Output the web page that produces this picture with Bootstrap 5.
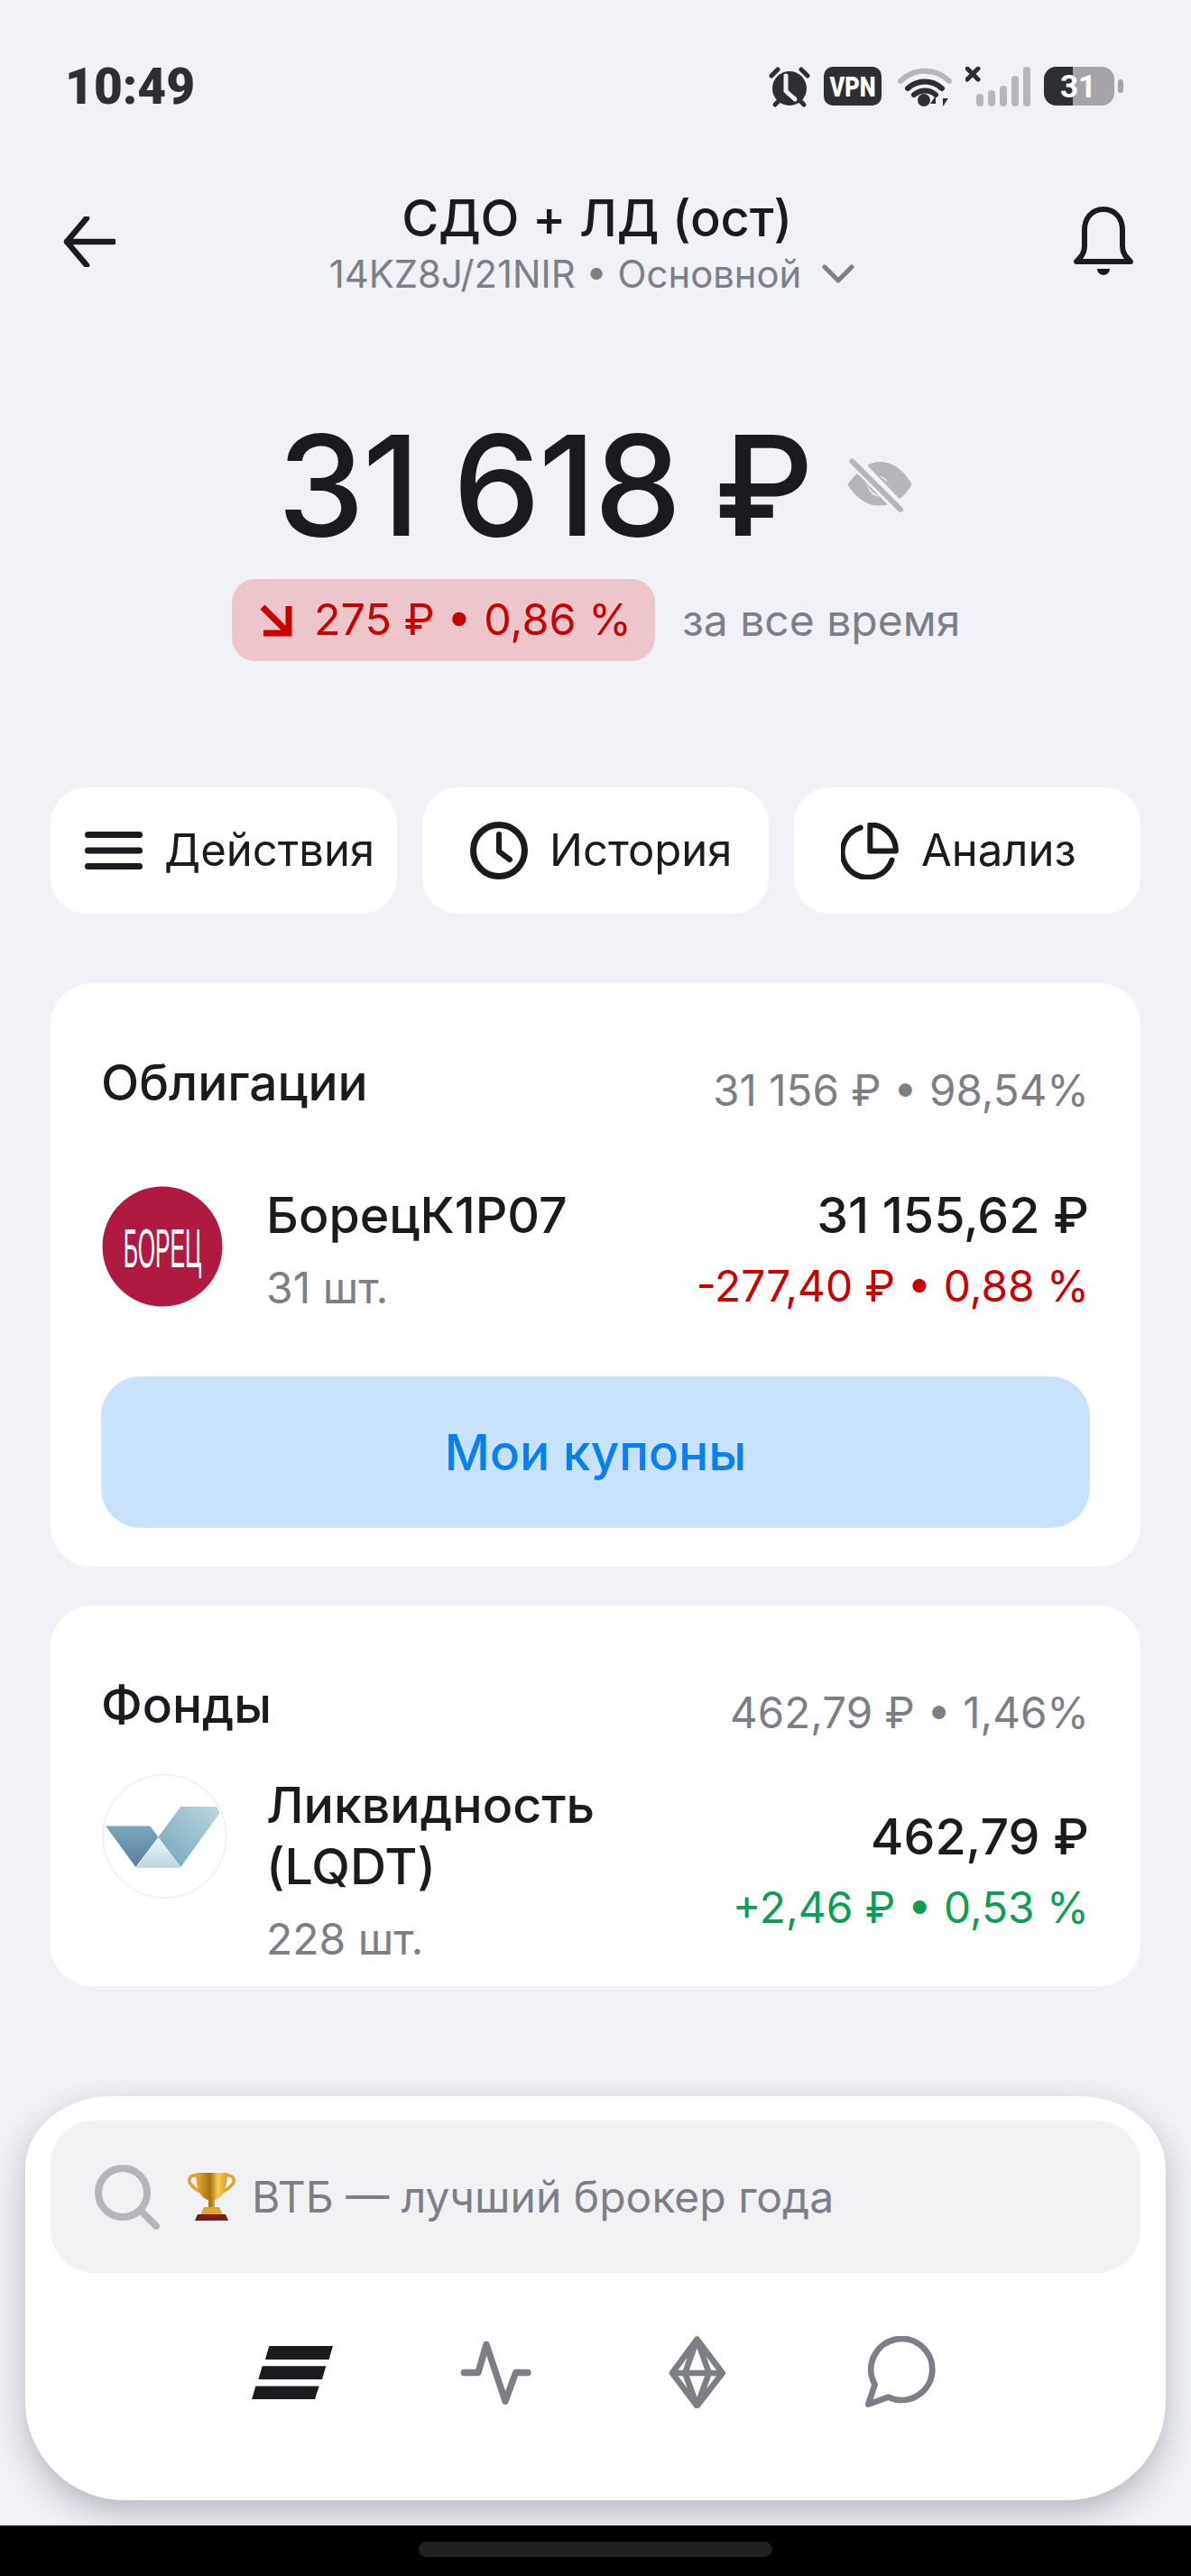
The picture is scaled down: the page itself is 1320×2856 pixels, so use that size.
<!DOCTYPE html>
<html lang="ru">
<head>
<meta charset="utf-8">
<title>СДО + ЛД (ост)</title>
<link rel="stylesheet" href="https://cdn.jsdelivr.net/npm/bootstrap@5.3.0/dist/css/bootstrap.min.css">
<style>
html,body{margin:0;padding:0}
body{width:1320px;height:2856px;overflow:hidden;background:#f0f2f7;color:#1a1b1f;font-family:Inter,"Noto Sans",sans-serif;font-size:48px;line-height:1.2}
svg{display:block;flex:none}
.shell{height:2856px}
.stat-row{height:118px;padding:74px 75px 0 72px}
.clock-txt{font-family:Roboto,sans-serif;font-weight:900;font-size:55px;line-height:44px;color:#2e2f33}
.gap-a{margin-left:15px}
.gap-b{margin-left:18px}
.head-bar{height:186px;padding:94px 63px 0 70px}
.back-ico{margin-top:28px}
.bell-ico{margin-top:16px}
.head-title{font-size:56px;line-height:60px;font-weight:500;letter-spacing:-.2px;margin-left:6px}
.head-sub{font-size:41.800px;line-height:50px;color:#7d7f87;margin-top:7px;margin-right:5px;gap:23px}
.amount-wrap{height:338px;padding-top:154px}
.amount-val{font-size:154px;line-height:160px;font-weight:500;letter-spacing:-2.300px;margin-right:36px}
.chip-row{height:91px;gap:30px;padding-left:257px}
.loss-chip{height:91px;width:469px;background:#edc6cc;border-radius:26px;color:#c80000;padding-left:31px;gap:24px;font-size:48.500px}
.muted-txt{color:#7d7f87}
.act-row{margin:140px 56px 0;gap:28px}
.act-btn{width:384px;height:140px;border-radius:40px;background:#fff;border:0;color:#1a1b1f;font-size:49px;gap:24px}
.act-a{padding:0 0 0 38px}
.act-b{padding:0 0 0 53px}
.act-c{padding:0 0 0 52px}
.panel-box{margin:77px 56px 0;background:#fff;border-radius:46px;padding:0 57px 0 56px}
.panel-a{height:647px}
.panel-b{height:422px;margin-top:43px}
.panel-head{align-items:center;padding-top:71px}
.panel-name{font-size:55px;line-height:64px;font-weight:500}
.panel-sum{font-size:47.500px;line-height:60px;color:#7d7f87;margin-top:18px}
.bond-row{margin-top:74px}
.fund-row{margin-top:38px}
.logo-gap-a{margin:0 48px 8px 1px}
.logo-gap-b{margin:0 43px 0 1px}
.asset-name{font-size:55.500px;line-height:68px;font-weight:500}
.asset-cnt{font-size:48px;line-height:60px;color:#7d7f87;margin-top:17px}
.asset-val{font-size:55.500px;line-height:64px;font-weight:500}
.asset-chg{font-size:47.800px;line-height:60px;margin-top:17px}
.fund-vals{margin-top:37px}
.loss-txt{color:#c80000}
.gain-txt{color:#0e9d52}
.coupon-btn{display:block;width:1096px;height:168px;margin-top:68px;border:0;border-radius:44px;background:#c8e2fd;color:#0a7ff0;font-size:55px;font-weight:500}
.dock-box{width:1264px;height:448px;margin:0 28px;background:#fff;border-radius:96px 96px 110px 110px/80px 80px 110px 110px;box-shadow:0 14px 34px rgba(60,62,75,.32);padding:27px 28px 0}
.find-box{height:169px;background:#f2f2f4;border-radius:48px;padding-left:49px;color:#7d7f87;font-size:48px}
.cup-ico{margin-left:31px}
.find-txt{margin-left:18px}
.dock-nav{height:220px}
.nav-a{margin-left:223px}
.nav-b{margin-left:141px}
.nav-c{margin-left:152px}
.nav-d{margin-left:154px}
.nav-bar{height:56px;background:#000;padding-top:18px;margin-top:28px}
.home-pill{width:392px;height:17px;border-radius:9px;background:#202020}
</style>
</head>
<body>
<div class="shell d-flex flex-column">
  <div class="stat-row d-flex justify-content-between align-items-start">
    <div class="clock-txt">10:49</div>
    <div class="d-flex align-items-start">
      <svg width="46" height="46" viewBox="0 0 46 46"><path d="M3 10 10 3M43 10 36 3" stroke="#2e2f33" stroke-width="5" stroke-linecap="round"/><circle cx="23" cy="24" r="19" fill="#2e2f33"/><path d="M7 42l4-4M39 42l-4-4" stroke="#2e2f33" stroke-width="5" stroke-linecap="round"/><path d="M19 10v17l10 9" fill="none" stroke="#f0f2f7" stroke-width="5" stroke-linecap="round"/></svg>
      <svg class="gap-a" width="64" height="43" viewBox="0 0 64 43"><rect width="64" height="43" rx="10" fill="#2e2f33"/><text transform="translate(32 33) scale(.82 1)" text-anchor="middle" font-family="Roboto" font-weight="900" font-size="31" fill="#fff">VPN</text></svg>
      <svg class="gap-b" width="60" height="46" viewBox="0 0 60 46"><path d="M3 16C18 1 42 1 57 16" fill="none" stroke="#b6b7bb" stroke-width="6" stroke-linecap="round"/><path d="M11 24C22 14 38 14 49 24M18 31C25 25 35 25 42 31" fill="none" stroke="#2e2f33" stroke-width="6" stroke-linecap="round"/><circle cx="29" cy="37" r="7" fill="#2e2f33"/><path d="M42 44V32l-6 9h6zM50 31v13l6-9h-6z" fill="#2e2f33"/></svg>
      <svg class="gap-a" width="72" height="44" viewBox="0 0 72 44"><path d="M2 2 14 14M14 2 2 14" stroke="#2e2f33" stroke-width="5" stroke-linecap="round"/><g fill="none" stroke="#b6b7bb" stroke-width="8" stroke-linecap="round"><path d="M16 34v6M29 30v10M42 25v15M55 14v26M68 4v36"/></g></svg>
      <svg class="gap-a" width="88" height="43" viewBox="0 0 88 43"><rect width="78" height="43" rx="14" fill="#a5a5a9"/><path d="M14 0h18v43H14A14 14 0 0 1 0 29V14A14 14 0 0 1 14 0z" fill="#2e2f33"/><rect x="82" y="14" width="6" height="15" rx="3" fill="#a5a5a9"/><text x="38" y="34" text-anchor="middle" font-family="Roboto" font-weight="700" font-size="35" fill="#fff">31</text></svg>
    </div>
  </div>

  <div class="head-bar d-flex justify-content-between align-items-start">
    <svg class="back-ico" width="58" height="56" viewBox="0 0 58 56"><path d="M26 2 4 28l22 26M4 28h52" fill="none" stroke="#1a1b1f" stroke-width="6.500" stroke-linecap="round" stroke-linejoin="round"/></svg>
    <div class="text-center">
      <div class="head-title">СДО + ЛД (ост)</div>
      <div class="head-sub d-flex align-items-center justify-content-center">14KZ8J/21NIR • Основной
        <svg width="36" height="22" viewBox="0 0 36 22"><path d="M3 3l15 15L33 3" fill="none" stroke="#7d7f87" stroke-width="5" stroke-linecap="round" stroke-linejoin="round"/></svg>
      </div>
    </div>
    <svg class="bell-ico" width="68" height="78" viewBox="0 0 68 78"><path d="M34 4C21 4 13 14 13 27v18c0 8-4 12-9 17h60c-5-5-9-9-9-17V27C55 14 47 4 34 4z" fill="none" stroke="#1a1b1f" stroke-width="6" stroke-linejoin="round"/><path d="M27 70a7 7 0 0 0 14 0z" fill="#1a1b1f"/></svg>
  </div>

  <div class="amount-wrap text-center">
    <div class="d-flex justify-content-center align-items-center">
      <div class="amount-val">31 618 ₽</div>
      <svg width="77" height="62" viewBox="100 55 230 185"><path d="M110 145C150 90 190 70 215 70c45 0 85 30 107 75-22 45-67 70-107 70-45 0-80-30-105-70z" fill="#b5b6bb"/><path d="M125 60l172 178" stroke="#f0f2f7" stroke-width="42"/><path d="M125 68l160 160" stroke="#b5b6bb" stroke-width="18" stroke-linecap="round"/><path d="M175 140c5 20 20 35 40 43-20 5-40-20-40-43zM216 118c12 0 22 8 26 18z" fill="#f0f2f7"/></svg>
    </div>
  </div>

  <div class="chip-row d-flex justify-content-start">
    <div class="loss-chip d-flex align-items-center">
      <svg width="36" height="36" viewBox="0 0 36 36"><path d="M3 3l28 28M32 2v30H4" fill="none" stroke="#c80000" stroke-width="7"/></svg>
      <span>275 ₽ • 0,86 %</span>
    </div>
    <div class="muted-txt align-self-center">за все время</div>
  </div>

  <div class="act-row d-flex">
    <button class="act-btn act-a btn d-flex align-items-center">
      <svg width="64" height="42" viewBox="0 0 64 42"><path d="M3.500 3.500h57M3.500 21h57M3.500 38.500h57" stroke="#1a1b1f" stroke-width="7" stroke-linecap="round"/></svg>
      Действия
    </button>
    <button class="act-btn act-b btn d-flex align-items-center">
      <svg width="64" height="64" viewBox="0 0 64 64"><circle cx="32" cy="32" r="28.500" fill="none" stroke="#1a1b1f" stroke-width="7"/><path d="M32 14v19l12 9" fill="none" stroke="#1a1b1f" stroke-width="6" stroke-linecap="round" stroke-linejoin="round"/></svg>
      История
    </button>
    <button class="act-btn act-c btn d-flex align-items-center">
      <svg width="65" height="63" viewBox="155 125 195 190"><path d="M220 142A85 85 0 1 0 325 250" fill="none" stroke="#1a1b1f" stroke-width="18" stroke-linecap="round"/><path d="M252 132v88h86c0-50-38-88-86-88z" fill="none" stroke="#1a1b1f" stroke-width="18" stroke-linejoin="round"/></svg>
      Анализ
    </button>
  </div>

  <div class="panel-box panel-a">
    <div class="panel-head d-flex justify-content-between">
      <div class="panel-name">Облигации</div>
      <div class="panel-sum">31 156 ₽ • 98,54%</div>
    </div>
    <div class="bond-row d-flex align-items-center justify-content-between">
      <div class="d-flex align-items-center">
        <svg class="logo-gap-a" width="134" height="134" viewBox="0 0 134 134"><circle cx="67" cy="67" r="66.500" fill="#b01a42"/><text transform="translate(67 90) scale(.4 1)" text-anchor="middle" font-family="Liberation Sans" font-size="62" fill="#fff">БОРЕЦ</text></svg>
        <div>
          <div class="asset-name">БорецК1Р07</div>
          <div class="asset-cnt">31 шт.</div>
        </div>
      </div>
      <div class="text-end">
        <div class="asset-val">31 155,62 ₽</div>
        <div class="asset-chg loss-txt">-277,40 ₽ • 0,88 %</div>
      </div>
    </div>
    <button class="coupon-btn btn">Мои купоны</button>
  </div>

  <div class="panel-box panel-b">
    <div class="panel-head d-flex justify-content-between">
      <div class="panel-name">Фонды</div>
      <div class="panel-sum">462,79 ₽ • 1,46%</div>
    </div>
    <div class="fund-row d-flex align-items-start justify-content-between">
      <div class="d-flex align-items-start">
        <svg class="logo-gap-b" width="139" height="138" viewBox="218 110 417 415">
          <defs>
            <linearGradient id="lg1" x1="0" y1="0" x2="0" y2="1"><stop offset="0" stop-color="#76a8bb"/><stop offset="1" stop-color="#5d7da0"/></linearGradient>
            <linearGradient id="lg2" x1="1" y1="0" x2="0" y2="1"><stop offset="0" stop-color="#bcd8e0"/><stop offset="1" stop-color="#6fa5b9"/></linearGradient>
            <linearGradient id="lg3" x1="0" y1="0" x2="0" y2="1"><stop offset="0" stop-color="#eef5f7"/><stop offset="1" stop-color="#bcd5de"/></linearGradient>
          </defs>
          <circle cx="426" cy="317" r="205" fill="#fff" stroke="#eeeff1" stroke-width="5"/>
          <path d="M230 283H378L405 320 330 420z" fill="url(#lg1)"/>
          <path d="M480 218H600L610 240 480 420 405 320z" fill="url(#lg2)"/>
          <path d="M405 322 480 422H332z" fill="url(#lg3)"/>
        </svg>
        <div>
          <div class="asset-name">Ликвидность<br>(LQDT)</div>
          <div class="asset-cnt">228 шт.</div>
        </div>
      </div>
      <div class="text-end fund-vals">
        <div class="asset-val">462,79 ₽</div>
        <div class="asset-chg gain-txt">+2,46 ₽ • 0,53 %</div>
      </div>
    </div>
  </div>

  <div class="flex-grow-1"></div>

  <div class="dock-box">
    <div class="find-box d-flex align-items-center">
      <svg width="72" height="72" viewBox="0 0 72 72"><circle cx="31" cy="31" r="27" fill="none" stroke="#b5b6bb" stroke-width="8"/><path d="M52 52l16 16" stroke="#b5b6bb" stroke-width="8" stroke-linecap="round"/></svg>
      <svg class="cup-ico" width="53" height="55" viewBox="0 0 53 55">
        <defs><linearGradient id="gold" x1="0" x2="1" y1="0" y2="0"><stop offset="0" stop-color="#e5ad33"/><stop offset=".45" stop-color="#a96f12"/><stop offset=".7" stop-color="#f6cd58"/><stop offset="1" stop-color="#dc9d26"/></linearGradient></defs>
        <path d="M10 4C3 3 0 8 3 13c3 5 9 8 13 10M43 4c7-1 10 4 7 9-3 5-9 8-13 10" fill="none" stroke="#dda52f" stroke-width="3.500"/>
        <path d="M9 1h35c0 14-4 28-14 30v8h-7v-8C13 29 9 15 9 1z" fill="url(#gold)"/>
        <path d="M18 39h17l4 9H14z" fill="#e0a52d"/><path d="M11 47h31l3 7H8z" fill="#7e1c10"/>
      </svg>
      <span class="find-txt">ВТБ — лучший брокер года</span>
    </div>
    <div class="dock-nav d-flex align-items-center justify-content-start">
      <svg class="nav-a" width="90" height="59" viewBox="27 63 271 178"><path d="M85 63H298L285 108H72zM62 130H275L262 175H49zM40 197H252L238 241H27z" fill="#1a1b1f"/></svg>
      <svg class="nav-b" width="79" height="71" viewBox="715 40 237 212"><path d="M728 146H775L802 52 865 241 900 146H940" fill="none" stroke="#7d7f87" stroke-width="22" stroke-linecap="round" stroke-linejoin="round"/></svg>
      <svg class="nav-c" width="63" height="80" viewBox="60 25 190 240"><g fill="none" stroke="#7d7f87" stroke-width="20" stroke-linejoin="round"><path d="M155 35 240 148 155 258 72 148zM72 148H240M155 35 115 148 155 258M155 35 195 148 155 258"/></g></svg>
      <svg class="nav-d" width="80" height="80" viewBox="710 25 240 240"><path d="M745 186 723 252 790 228A102 102 0 1 0 745 186Z" fill="none" stroke="#7d7f87" stroke-width="20" stroke-linejoin="round"/></svg>
    </div>
  </div>

  <div class="nav-bar d-flex justify-content-center">
    <div class="home-pill"></div>
  </div>
</div>
</body>
</html>
